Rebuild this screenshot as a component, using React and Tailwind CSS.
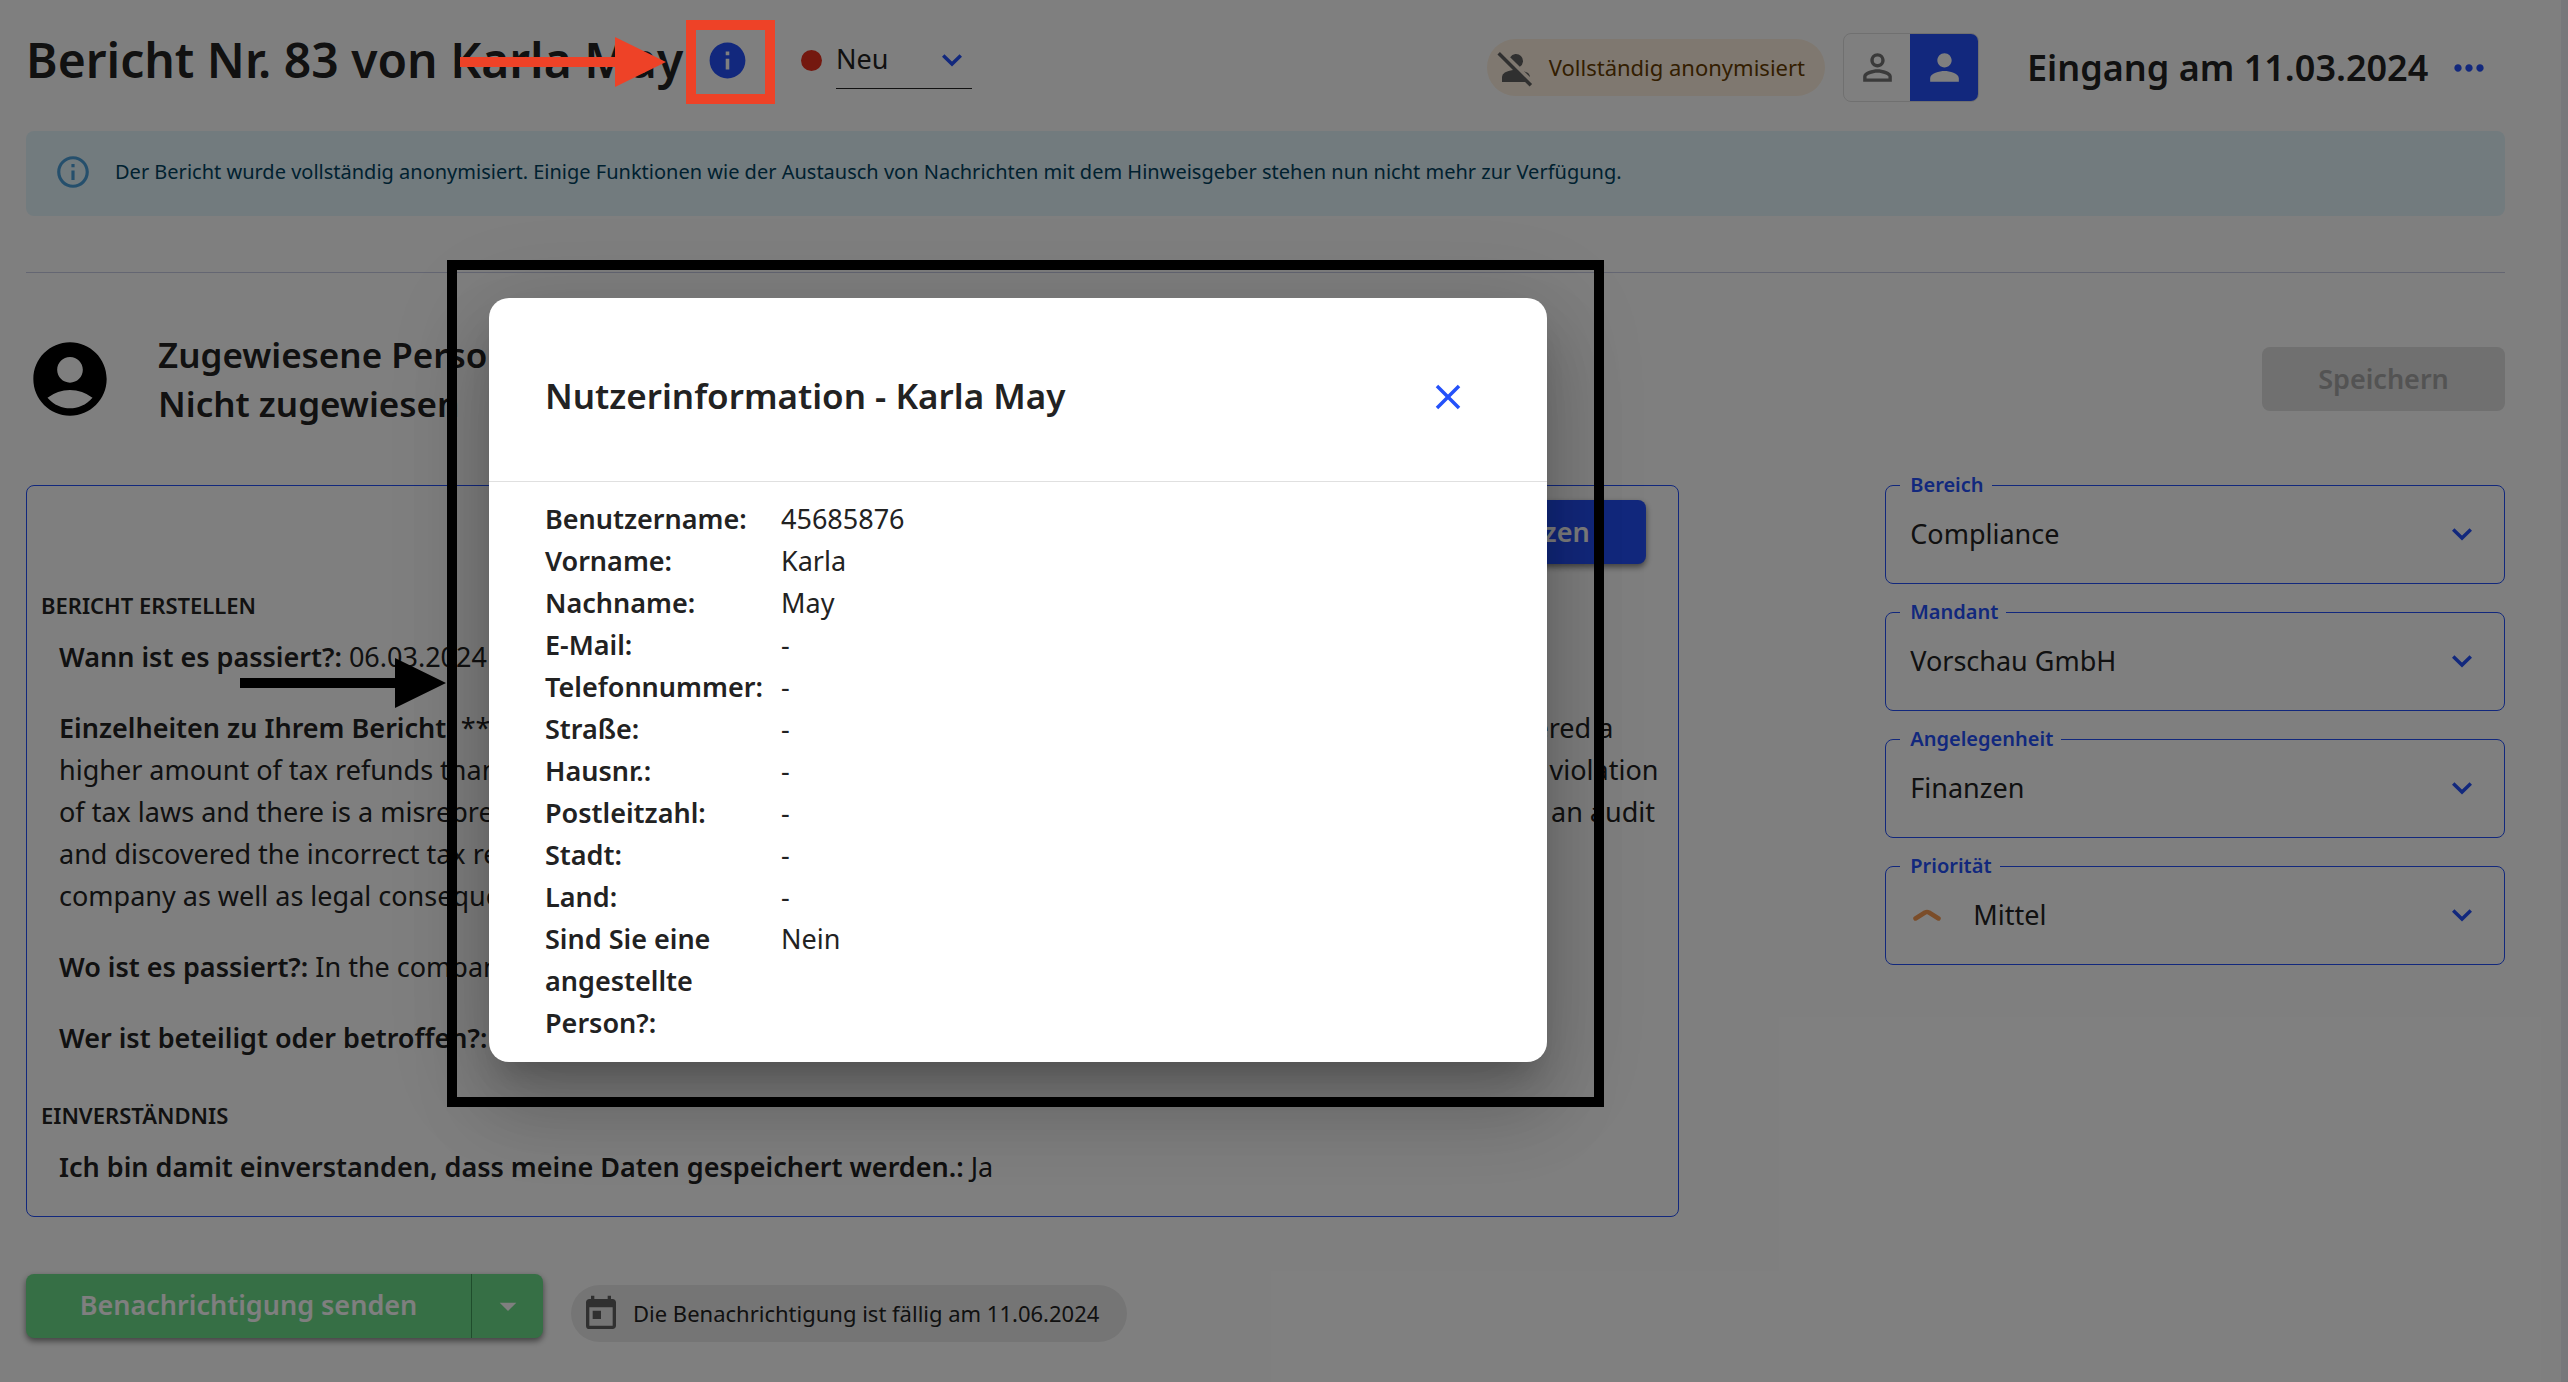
import { MdInfo, MdInfoOutline, MdPersonOff, MdPersonOutline, MdPerson, MdMoreHoriz, MdAccountCircle, MdArrowDropDown, MdToday, MdClose } from 'react-icons/md';

const STATUS_FIELDS = [
  { id: 'bereich', label: 'Bereich', value: 'Compliance' },
  { id: 'mandant', label: 'Mandant', value: 'Vorschau GmbH' },
  { id: 'angelegenheit', label: 'Angelegenheit', value: 'Finanzen' },
  { id: 'prioritaet', label: 'Priorität', value: 'Mittel', priority: true },
];

const USER_INFO = [
  ['Benutzername:', '45685876'],
  ['Vorname:', 'Karla'],
  ['Nachname:', 'May'],
  ['E-Mail:', '-'],
  ['Telefonnummer:', '-'],
  ['Straße:', '-'],
  ['Hausnr.:', '-'],
  ['Postleitzahl:', '-'],
  ['Stadt:', '-'],
  ['Land:', '-'],
  ['Sind Sie eine angestellte Person?:', 'Nein'],
];

function Chevron({ className }) {
  return (
    <svg viewBox="0 0 20 14" fill="none" stroke="#2451fa" strokeWidth="3.5" className={className}>
      <path d="M1.2 2.5 L10 11 L18.8 2.5" />
    </svg>
  );
}

function SelectField({ id, label, value, priority }) {
  return (
    <fieldset className="h-[113px] rounded-lg border border-[#2451fa] pr-8 pl-[14px]">
      <legend className="h-[28px] pr-2 pl-[10px] text-[20px] leading-[28px] font-semibold text-[#2451fa]">
        <label htmlFor={id}>{label}</label>
      </legend>
      <div className="flex h-[70px] items-center pl-[10px]">
        {priority && (
          <svg viewBox="0 0 28 14" className="mr-8 ml-[3px] h-[14px] w-7" fill="none" stroke="#f79a52" strokeWidth="4.5" strokeLinecap="round" strokeLinejoin="round">
            <path d="M2.5 10.5 L12 4.5 Q14 3.500 16 4.500 L25.500 10.500" />
          </svg>
        )}
        <select id={id} className="min-w-0 flex-1 appearance-none bg-transparent text-[27px] outline-none">
          <option>{value}</option>
        </select>
        <Chevron className="h-[14px] w-5" />
      </div>
    </fieldset>
  );
}

function Header() {
  return (
    <header className="flex h-[131px] items-start justify-between">
      <div className="flex h-[120px] items-center">
        <h1 className="w-[680px] text-[48px] font-semibold whitespace-nowrap">Bericht Nr. 83 von Karla May</h1>
        <button aria-label="Nutzerinformation">
          <MdInfo className="size-[43px] text-[#2451fa]" />
        </button>
        <span className="ml-[52px] size-[21px] rounded-full bg-[#e8301f]" />
        <div className="ml-[14px] flex h-[58px] w-[136px] items-center border-b border-[#222] pr-[10px]">
          <select aria-label="Status" className="min-w-0 flex-1 appearance-none bg-transparent text-[27px] outline-none">
            <option>Neu</option>
          </select>
          <Chevron className="h-[14px] w-5" />
        </div>
      </div>
      <div className="flex h-[135px] items-center">
        <div className="flex h-[57px] items-center gap-3 rounded-full bg-[#fff1e0] pr-5 pl-2 text-[22px] text-[#663c00]">
          <MdPersonOff className="size-[42px] text-[#616161]" />
          <span>Vollständig anonymisiert</span>
        </div>
        <div className="ml-[18px] flex h-[69px] overflow-hidden rounded-lg border border-[#e0e0e0]">
          <button aria-label="Anonym" className="flex w-[66px] items-center justify-center">
            <MdPersonOutline className="size-[43px] text-[#757575]" />
          </button>
          <button aria-label="Person" className="flex w-[68px] items-center justify-center bg-[#2451fa]">
            <MdPerson className="size-[43px] text-white" />
          </button>
        </div>
        <h2 className="ml-12 w-[408px] text-[36px] font-semibold whitespace-nowrap">Eingang am 11.03.2024</h2>
        <button aria-label="Mehr" className="mr-[14px] ml-3">
          <MdMoreHoriz className="size-[44px] text-[#2451fa]" />
        </button>
      </div>
    </header>
  );
}

function ReportCard() {
  return (
    <section className="w-2/3 rounded-lg border border-[#2451fa] pb-7">
      <div className="flex h-[96px] items-start justify-end pt-[14px] pr-8">
        <button className="h-16 rounded-lg bg-[#2451fa] px-14 text-[27px] font-semibold text-white shadow-[0_3px_6px_rgba(0,0,0,0.5)]">
          Bericht übersetzen
        </button>
      </div>
      <h3 className="pt-2 pl-[14px] text-[22px] leading-[30px] font-semibold">BERICHT ERSTELLEN</h3>
      <div className="flex flex-col gap-[29px] pt-4 pl-8 text-[27px] leading-[42px] whitespace-nowrap">
        <p>
          <b className="font-semibold">Wann ist es passiert?:</b> 06.03.2024
        </p>
        <p>
          <b className="font-semibold">Einzelheiten zu Ihrem Bericht:</b> *** has repeatedly worked on the tax documents of our company and knowingly entered a
          <br />
          higher amount of tax refunds than the company was originally entitled to receive during the last year, which is a clear violation
          <br />
          of tax laws and there is a misrepresentation of many financial statements to the authorities. The tax office carried out an audit
          <br />
          and discovered the incorrect tax refunds. This may lead to financial damage for the
          <br />
          company as well as legal consequences.
        </p>
        <p>
          <b className="font-semibold">Wo ist es passiert?:</b> In the company
        </p>
        <p>
          <b className="font-semibold">Wer ist beteiligt oder betroffen?:</b> ***
        </p>
      </div>
      <h3 className="pt-[41px] pl-[14px] text-[22px] leading-[30px] font-semibold">EINVERSTÄNDNIS</h3>
      <p className="pt-4 pl-8 text-[27px] leading-[42px]">
        <b className="font-semibold">Ich bin damit einverstanden, dass meine Daten gespeichert werden.:</b> Ja
      </p>
    </section>
  );
}

function UserInfoDialog() {
  return (
    <div
      role="dialog"
      aria-label="Nutzerinformation"
      className="absolute top-[298px] left-[489px] w-[1058px] rounded-[20px] bg-white pb-[18px] shadow-[0_22px_30px_-14px_rgba(0,0,0,0.2),0_48px_76px_6px_rgba(0,0,0,0.14),0_18px_92px_16px_rgba(0,0,0,0.12)]"
    >
      <div className="flex h-[184px] items-center justify-between border-b border-[#e0e0e0] pt-[14px] pr-[78px] pl-14">
        <h2 className="text-[35px] font-semibold">Nutzerinformation - Karla May</h2>
        <button aria-label="Schließen">
          <MdClose className="size-[42px] text-[#2451fa]" />
        </button>
      </div>
      <dl className="grid grid-cols-[236px_1fr] pt-4 pl-14 text-[27px] leading-[42px]">
        {USER_INFO.map(([label, value]) => (
          <div key={label} className="contents">
            <dt className="pr-4 font-semibold">{label}</dt>
            <dd>{value}</dd>
          </div>
        ))}
      </dl>
    </div>
  );
}

// Markers of the help article, drawn on top of everything
function Annotations() {
  return (
    <>
      <div className="absolute top-[20px] left-[686px] h-[84px] w-[89px] border-10 border-[#ee4227]" />
      <svg viewBox="0 0 206 50" fill="#ee4227" className="absolute top-[37px] left-[460px] h-[50px] w-[206px]">
        <path d="M0 20 H155 V0 L206 25 L155 50 V30 H0 Z" />
      </svg>
      <div className="absolute top-[260px] left-[447px] h-[847px] w-[1157px] border-10 border-black" />
      <svg viewBox="0 0 206 50" fill="#000" className="absolute top-[658px] left-[240px] h-[50px] w-[206px]">
        <path d="M0 20 H155 V0 L206 25 L155 50 V30 H0 Z" />
      </svg>
    </>
  );
}

export default function App() {
  return (
    <div className="relative min-h-screen overflow-hidden bg-[#eeeef4] font-['Noto_Sans',sans-serif] text-[#222]">
      <div className="mr-[7px] min-h-screen bg-white pr-14 pl-[26px]">
        <Header />
        <div className="flex h-[85px] items-center gap-[23px] rounded-lg bg-[#e5f6fd] px-7 pb-1 text-[20px] text-[#014361]">
          <MdInfoOutline className="size-[38px] text-[#4a9fd8]" />
          <p>
            Der Bericht wurde vollständig anonymisiert. Einige Funktionen wie der Austausch von Nachrichten mit dem Hinweisgeber stehen nun nicht mehr zur Verfügung.
          </p>
        </div>
        <hr className="mt-14 border-t border-[#c8cce4]" />
        <div className="flex h-[212px] items-center">
          <MdAccountCircle className="size-[88px] text-black" />
          <div className="ml-11 text-[35px] leading-[49px] font-semibold">
            <p>Zugewiesene Person:</p>
            <p>Nicht zugewiesen</p>
          </div>
          <button disabled className="ml-auto h-16 w-[243px] rounded-lg bg-[#e0e0e0] text-[27px] font-semibold text-[#a6a6a6]">
            Speichern
          </button>
        </div>
        <main className="flex items-start justify-between">
          <ReportCard />
          <div className="-mt-[14px] flex w-1/4 flex-col gap-[14px]">
            {STATUS_FIELDS.map((field) => (
              <SelectField key={field.id} {...field} />
            ))}
          </div>
        </main>
        <footer className="flex items-center pt-[52px] pb-9">
          <div className="flex h-16 rounded-lg bg-[#6cde8a] text-white shadow-[0_3px_6px_rgba(0,0,0,0.5)]">
            <button className="w-[446px] border-r border-[#3f9a58] text-[27px] font-semibold">Benachrichtigung senden</button>
            <button aria-label="Weitere Optionen" className="flex w-[71px] items-center justify-center">
              <MdArrowDropDown className="size-10" />
            </button>
          </div>
          <div className="mt-4 ml-7 flex h-[57px] items-center gap-3 rounded-full bg-[#ebebeb] pr-7 pl-[10px] text-[22px]">
            <MdToday className="size-10 text-[#616161]" />
            <span>Die Benachrichtigung ist fällig am 11.06.2024</span>
          </div>
        </footer>
      </div>
      <div className="absolute inset-0 bg-black/50" />
      <UserInfoDialog />
      <Annotations />
    </div>
  );
}
